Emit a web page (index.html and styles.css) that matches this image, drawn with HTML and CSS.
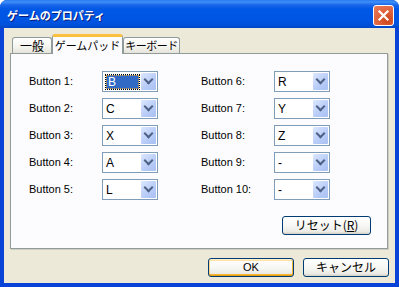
FILE: index.html
```html
<!DOCTYPE html>
<html lang="ja">
<head>
    <meta charset="UTF-8">
    <title>ゲームのプロパティ</title>
    <link rel="stylesheet" href="styles.css">
</head>
<body>
    <div class="window">
        <div class="titlebar">
            <span class="title">ゲームのプロパティ</span>
            <div class="close">
                <svg width="13" height="13" viewBox="0 0 13 13">
                    <path d="M2.5 2.5 L10.5 10.5 M10.5 2.5 L2.5 10.5" stroke="#fff" stroke-width="2.2" stroke-linecap="square"/>
                </svg>
            </div>
        </div>
        <div class="client">
            <div class="tabs">
                <div class="tab first">一般</div>
                <div class="tab active">ゲームパッド</div>
                <div class="tab last">キーボード</div>
            </div>
            <div class="panel">
                <div class="cols">
                    <div class="col">
                        <label>Button 1:</label>
                        <div class="combo"><span class="value"><span class="sel">B</span></span><span class="arrow"></span></div>
                        <label>Button 2:</label>
                        <div class="combo"><span class="value">C</span><span class="arrow"></span></div>
                        <label>Button 3:</label>
                        <div class="combo"><span class="value">X</span><span class="arrow"></span></div>
                        <label>Button 4:</label>
                        <div class="combo"><span class="value">A</span><span class="arrow"></span></div>
                        <label>Button 5:</label>
                        <div class="combo"><span class="value">L</span><span class="arrow"></span></div>
                    </div>
                    <div class="col">
                        <label>Button 6:</label>
                        <div class="combo"><span class="value">R</span><span class="arrow"></span></div>
                        <label>Button 7:</label>
                        <div class="combo"><span class="value">Y</span><span class="arrow"></span></div>
                        <label>Button 8:</label>
                        <div class="combo"><span class="value">Z</span><span class="arrow"></span></div>
                        <label>Button 9:</label>
                        <div class="combo"><span class="value">-</span><span class="arrow"></span></div>
                        <label>Button 10:</label>
                        <div class="combo"><span class="value">-</span><span class="arrow"></span></div>
                    </div>
                </div>
                <div class="panel-foot">
                    <div class="btn reset">リセット(<u>R</u>)</div>
                </div>
            </div>
            <div class="actions">
                <div class="btn default">OK</div>
                <div class="btn">キャンセル</div>
            </div>
        </div>
    </div>
</body>
</html>
```

FILE: styles.css
```css
* {
    box-sizing: border-box;
}
body {
    margin: 0;
    background: #fff;
    font-family: "Liberation Sans", Arial, sans-serif;
    font-size: 11px;
    color: #000;
}
.window {
    width: 399px;
    height: 287px;
    background: #0842d6;
    border-radius: 7px 7px 0 0;
    display: flex;
    flex-direction: column;
    overflow: hidden;
}
.titlebar {
    height: 28px;
    flex: none;
    display: flex;
    align-items: center;
    justify-content: space-between;
    padding: 0 5px 0 7px;
    background: linear-gradient(#2a7af0 0px, #3e8ff8 2px, #1a66ea 5px, #0058e6 9px, #0055e3 20px, #0050da 25px, #0046c4 28px);
}
.title {
    color: #fff;
    font-family: "Noto Sans CJK JP", sans-serif;
    font-weight: bold;
    font-size: 11px;
    text-shadow: 1px 1px #0a1a7a;
    margin-top: 1px;
}
.close {
    width: 21px;
    height: 21px;
    border: 1px solid #fff;
    border-radius: 3px;
    background: radial-gradient(circle at 70% 75%, #cc4418 0%, #e0623a 45%, #e87d5d 100%);
    display: flex;
    align-items: center;
    justify-content: center;
    margin-top: 2px;
}
.client {
    flex: 1;
    margin: 0 4px 4px 4px;
    background: #ece9d8;
    padding: 6px 7px 0 6px;
}
.tabs {
    display: flex;
    align-items: flex-end;
    height: 20px;
    margin-left: 2px;
    position: relative;
    z-index: 1;
}
.tab {
    height: 16px;
    border: 1px solid #919b9c;
    border-bottom: none;
    border-radius: 3px 3px 0 0;
    background: linear-gradient(#fff, #f3f3ef 60%, #e6e4da);
    font-family: "Noto Sans CJK JP", sans-serif;
    font-size: 11px;
    line-height: 15px;
    text-align: center;
    white-space: nowrap;
    margin-bottom: 1px;
}
.tab.first {
    width: 40px;
    font-size: 12px;
}
.tab.active {
    width: 71px;
    height: 20px;
    margin-bottom: 0;
    background: #fcfcfe;
    border-top: 3px solid #fbc13e;
    line-height: 16px;
}
.tab.last {
    width: 57px;
    letter-spacing: -0.5px;
}
.panel {
    width: 378px;
    height: 196px;
    border: 1px solid #919b9c;
    background: #fcfcfe;
    margin-top: -1px;
    padding: 17px 16px 0 18px;
    box-shadow: 1px 1px 0 #d0cec1;
    display: flex;
    flex-direction: column;
}
.cols {
    display: flex;
    gap: 43px;
}
.col {
    display: grid;
    grid-template-columns: 73px 56px;
    grid-auto-rows: 21px;
    row-gap: 6px;
    align-items: center;
}
.col label {
    padding-bottom: 1px;
}
.combo {
    height: 21px;
    border: 1px solid #7f9db9;
    background: #fff;
    display: flex;
    padding: 1px;
}
.value {
    flex: 1;
    padding-left: 2px;
    display: flex;
    align-items: center;
    font-size: 12px;
}
.sel {
    background: #316ac5;
    color: #fff;
    width: 33px;
    height: 14px;
    line-height: 12px;
    outline: 1px dotted #000;
    border: 1px dotted #e0a030;
    padding-left: 1px;
}
.arrow {
    width: 15px;
    border-radius: 1px;
    background: linear-gradient(135deg, #dde8ff, #b7cbf7 60%, #a9c0f3);
    position: relative;
}
.arrow::after {
    content: "";
    position: absolute;
    left: 4px;
    top: 3px;
    width: 5px;
    height: 5px;
    border-right: 2px solid #4d6185;
    border-bottom: 2px solid #4d6185;
    transform: rotate(45deg);
}
.panel-foot {
    display: flex;
    justify-content: flex-end;
    margin-top: 16px;
}
.btn {
    height: 19px;
    border: 1px solid #003c74;
    border-radius: 3px;
    background: linear-gradient(#fff, #f7f7f4 50%, #ecebe6 85%, #d6d0c5);
    font-family: "Noto Sans CJK JP", sans-serif;
    font-size: 12px;
    line-height: 16px;
    text-align: center;
}
.reset {
    width: 89px;
}
.actions {
    display: flex;
    justify-content: flex-end;
    gap: 9px;
    margin-top: 9px;
    margin-right: -1px;
}
.actions .btn {
    width: 86px;
}
.btn.default {
    font-family: "Liberation Sans", Arial, sans-serif;
    font-size: 11px;
    box-shadow: inset 0 1px #fff0cf, inset 0 -1px #e5a01a, inset 1px 0 #fbd88b, inset -1px 0 #f7b532, inset 0 2px #fce3a8, inset 0 -2px #f8b330;
}
```
